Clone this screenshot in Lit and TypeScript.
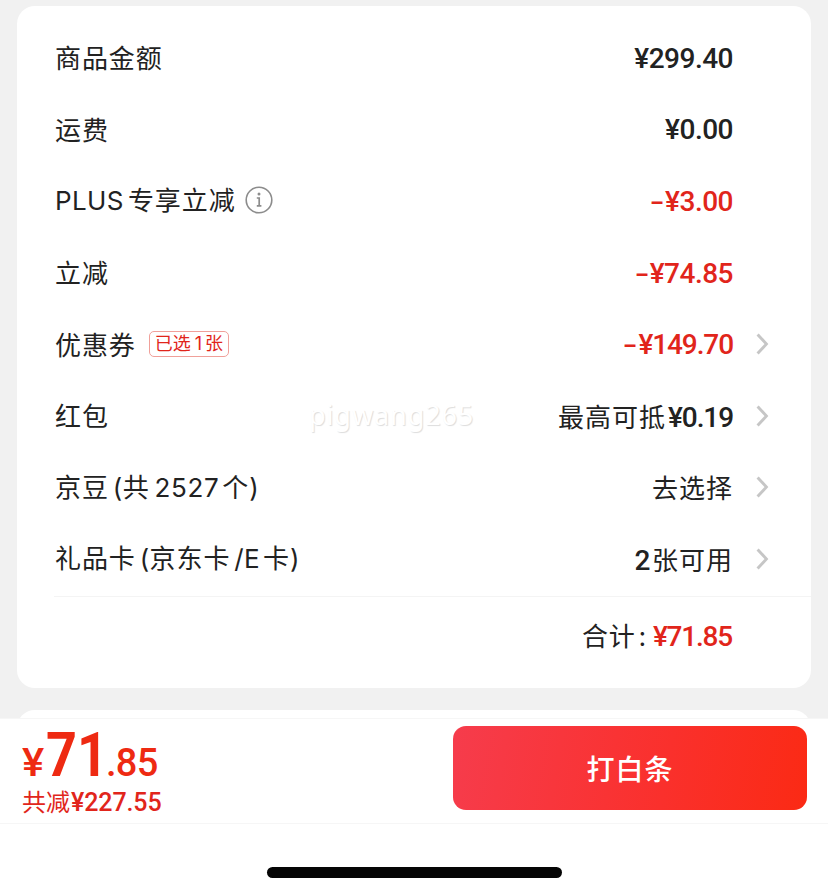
import { LitElement, css, html, nothing, svg } from "lit";
import { customElement, property } from "lit/decorators.js";
import { classMap } from "lit/directives/class-map.js";

type PriceRow = {
  label: unknown;
  info?: boolean;
  tag?: unknown;
  note?: string;
  count?: string;
  unit?: string;
  amount?: string;
  discount?: boolean;
  link?: boolean;
};

const rows: PriceRow[] = [
  { label: "商品金额", amount: "¥299.40" },
  { label: "运费", amount: "¥0.00" },
  {
    label: html`<span class="latin plus">PLUS</span>专享立减`,
    info: true,
    amount: "-¥3.00",
    discount: true,
  },
  { label: "立减", amount: "-¥74.85", discount: true },
  {
    label: "优惠券",
    tag: html`已选<span class="one">1</span>张`,
    amount: "-¥149.70",
    discount: true,
    link: true,
  },
  { label: "红包", note: "最高可抵", amount: "¥0.19", link: true },
  {
    label: html`京豆<span class="latin open">(</span>共<span
        class="latin beans"
        >2527</span
      >个<span class="latin">)</span>`,
    note: "去选择",
    link: true,
  },
  {
    label: html`礼品卡<span class="latin open">(</span>京东卡<span
        class="latin slash"
        >/E</span
      >卡<span class="latin">)</span>`,
    count: "2",
    unit: "张可用",
    link: true,
  },
];

// The minus is set wider than the font's own hyphen
const figures = (text: string) =>
  text.startsWith("-")
    ? html`<span class="minus">-</span>${text.slice(1)}`
    : text;

const infoIcon = html`
  <svg class="info" viewBox="0 0 28 28" width="28" height="28">
    ${svg`
      <circle cx="14" cy="14" r="12.8" fill="none" stroke="#8c8c8c" stroke-width="1.6" />
      <circle cx="14" cy="7.9" r="1.5" fill="#8c8c8c" />
      <path d="M11.8 12H14.2V19.6M11.8 19.8H16.4" fill="none" stroke="#8c8c8c" stroke-width="1.7" />
    `}
  </svg>
`;

const arrowIcon = html`
  <svg class="arrow" viewBox="0 0 14 24" width="14" height="24">
    <path
      d="M1.6 2.4L10.4 12L1.6 21.6"
      fill="none"
      stroke="#c6c6c6"
      stroke-width="2.9"
    />
  </svg>
`;

@customElement("price-row")
export class PriceRowElement extends LitElement {
  @property({ attribute: false })
  row!: PriceRow;

  render() {
    const { label, info, tag, note, count, unit, amount, discount, link } =
      this.row;
    const amountClasses = {
      amount: true,
      discount: !!discount,
      tight: !!amount?.includes("1"),
    };
    return html`
      <span class="label">${label}</span>
      ${info ? infoIcon : nothing}
      ${tag ? html`<span class="tag">${tag}</span>` : nothing}
      <span class="value">
        ${note ? html`<span class="note">${note}</span>` : nothing}
        ${count ? html`<span class="count">${count}</span>` : nothing}
        ${unit ? html`<span class="note">${unit}</span>` : nothing}
        ${amount
          ? html`<span class=${classMap(amountClasses)}
              >${figures(amount)}</span
            >`
          : nothing}
      </span>
      <span class="end">${link ? arrowIcon : nothing}</span>
    `;
  }

  static styles = css`
    :host {
      display: flex;
      align-items: center;
      height: 71.6px;
      padding-left: 38px;
      color: #222;
      font: 26px/36px Inter, "Noto Sans CJK SC", sans-serif;
    }
    .label {
      padding-bottom: 3px;
      font-family: "Noto Sans CJK SC", sans-serif;
      letter-spacing: 0.9px;
      white-space: nowrap;
    }
    .latin {
      font-family: Inter, sans-serif;
      letter-spacing: 0.4px;
    }
    .plus {
      margin-right: 4px;
    }
    .open {
      margin-left: 4px;
    }
    .beans {
      margin: 0 3px 0 5px;
      letter-spacing: 0.6px;
    }
    .slash {
      margin: 0 3px 0 4px;
    }
    .info {
      margin: 0 0 3px 9px;
    }
    .tag {
      box-sizing: border-box;
      height: 26px;
      margin: 0 0 2px 13px;
      padding: 0 5px;
      border: 1px solid #f0a09a;
      border-radius: 5px;
      color: #e1251b;
      font: 18px/23px Inter, "Noto Sans CJK SC", sans-serif;
      white-space: nowrap;
    }
    .one {
      margin: 0 3px 0 4px;
    }
    .value {
      display: flex;
      align-items: baseline;
      margin-left: auto;
      white-space: nowrap;
    }
    .note {
      font-family: "Noto Sans CJK SC", sans-serif;
      letter-spacing: 1px;
    }
    .note:only-child {
      padding-bottom: 2px;
    }
    .amount,
    .count {
      font-family: Roboto, sans-serif;
      font-size: 28px;
      font-weight: 500;
      letter-spacing: -0.5px;
    }
    .note + .amount {
      margin-left: 2px;
    }
    .count {
      margin-right: 2px;
    }
    .amount.tight {
      letter-spacing: -1.1px;
    }
    .discount {
      color: #e1251b;
    }
    .minus {
      display: inline-block;
      width: 15px;
      transform: scaleX(1.5);
      transform-origin: left;
    }
    .end {
      display: flex;
      width: 55px;
      margin: 0 0 2px 23px;
    }
  `;
}

@customElement("app-root")
export class AppRoot extends LitElement {
  render() {
    return html`
      <main class="content">
        <section class="card">
          ${rows.map((row) => html`<price-row .row=${row}></price-row>`)}
          <div class="total">
            合计<span class="colon">:</span><span class="sum">¥71.85</span>
          </div>
          <span class="watermark">pigwang265</span>
        </section>
        <section class="card next"></section>
      </main>
      <footer class="footer">
        <div class="bar">
          <div class="pay">
            <div class="price">
              <span class="yen">¥</span><span class="big">71</span
              ><span class="cents">.85</span>
            </div>
            <div class="saved">共减<span class="off">¥227.55</span></div>
          </div>
          <button class="submit">打白条</button>
        </div>
        <div class="home"></div>
      </footer>
    `;
  }

  static styles = css`
    :host {
      display: flex;
      flex-direction: column;
      height: 895px;
      overflow: hidden;
      background: #f1f1f1;
      font-family: "Noto Sans CJK SC", sans-serif;
    }
    .content {
      box-sizing: border-box;
      height: 718px;
      padding: 6px 17px 0;
      overflow: hidden;
    }
    .card {
      position: relative;
      box-sizing: border-box;
      height: 682px;
      padding-top: 17px;
      border-radius: 18px;
      background: #fff;
    }
    .next {
      height: 60px;
      margin-top: 22px;
    }
    .total {
      display: flex;
      align-items: baseline;
      justify-content: flex-end;
      margin-left: 37px;
      padding: 20px 79px 0 0;
      border-top: 1px solid #f4f4f4;
      color: #222;
      font-size: 26px;
      line-height: 36px;
      letter-spacing: 0.9px;
    }
    .colon {
      margin: 0 6px 3px 3px;
      align-self: center;
    }
    .sum {
      color: #e1251b;
      font: 500 28px/36px Roboto, sans-serif;
      letter-spacing: -1.2px;
    }
    .watermark {
      position: absolute;
      left: 292px;
      top: 391px;
      color: #fff;
      font: 27px/36px "Noto Sans", sans-serif;
      letter-spacing: 0.9px;
      text-shadow: 1px 1px 1px #ddd;
    }
    .footer {
      height: 177px;
      background: #fff;
    }
    .bar {
      display: flex;
      box-sizing: border-box;
      height: 106px;
      padding: 7px 21px 0 22px;
      justify-content: space-between;
      border-top: 1px solid #f6f6f6;
      border-bottom: 1px solid #f6f6f6;
    }
    .pay {
      color: #ee2a12;
      white-space: nowrap;
    }
    .price {
      display: flex;
      align-items: baseline;
      height: 60px;
      font: 500 38px/58px Roboto, sans-serif;
    }
    .yen {
      width: 24px;
      transform: scaleX(1.1);
      transform-origin: left;
    }
    .big {
      width: 60px;
      font-size: 62px;
      font-weight: 700;
      transform: scaleX(0.87);
      transform-origin: left;
    }
    .cents {
      letter-spacing: -0.7px;
    }
    .saved {
      color: #e1251b;
      font-size: 24px;
      line-height: 30px;
    }
    .off {
      margin-left: 1px;
      font: 500 25px/30px Roboto, sans-serif;
      letter-spacing: -0.1px;
    }
    .submit {
      width: 354px;
      height: 84px;
      padding: 0;
      border: 0;
      border-radius: 13px;
      background: linear-gradient(100deg, #f63c4c, #fa302c 60%, #fb2a14);
      color: #fff;
      font: 500 28px/40px "Noto Sans CJK SC", sans-serif;
      letter-spacing: 1px;
    }
    .home {
      width: 295px;
      height: 11px;
      margin: 43px auto 0;
      border-radius: 6px;
      background: #050505;
    }
  `;
}

declare global {
  interface HTMLElementTagNameMap {
    "app-root": AppRoot;
    "price-row": PriceRowElement;
  }
}
